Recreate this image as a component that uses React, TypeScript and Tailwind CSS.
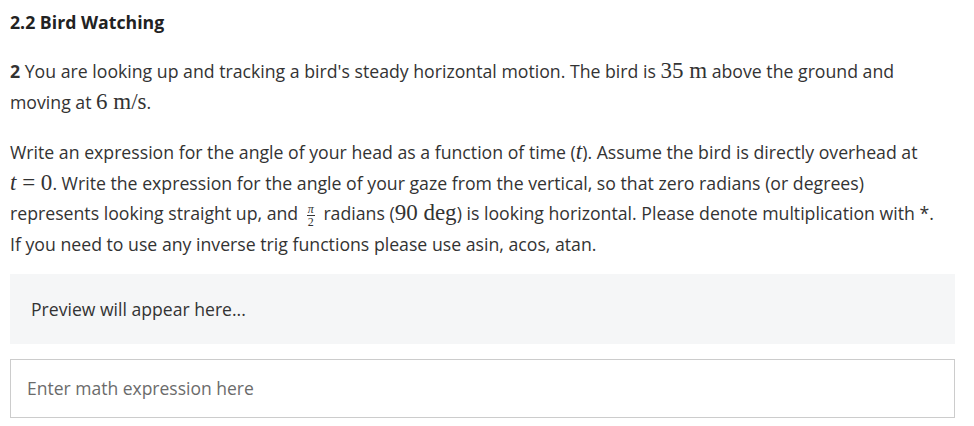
import React from 'react';

const M: React.FC<{ children: React.ReactNode; italic?: boolean }> = ({ children, italic }) => (
  <span className={`font-['Liberation_Serif',serif] text-[1.3em] leading-none ${italic ? 'italic' : ''}`}>
    {children}
  </span>
);

const Frac: React.FC<{ num: React.ReactNode; den: React.ReactNode }> = ({ num, den }) => (
  <span className="inline-flex flex-col items-center align-middle -my-3 font-['Liberation_Serif',serif] text-[12px] leading-[1] mx-[4px]">
    <span className="italic px-[1px]">{num}</span>
    <span className="block h-px w-full bg-[#333]"></span>
    <span className="px-[1px]">{den}</span>
  </span>
);

export default function App() {
  return (
    <div className="bg-white min-h-screen w-[974px] px-[10px] pt-[10px] text-[#333] font-['Open_Sans',sans-serif]">
      <h2 className="text-[17.7px] font-bold text-[#222] leading-[24px] mb-[22px]">2.2 Bird Watching</h2>

      <p className="text-[17.7px] leading-[31px] mb-[19px] whitespace-nowrap">
        <b className="font-bold">2</b> You are looking up and tracking a bird's steady horizontal motion. The bird is{' '}
        <M>35 m</M> above the ground and
        <br />
        moving at <M>6 m/s</M>.
      </p>

      <p className="text-[17.7px] leading-[30.7px] whitespace-nowrap">
        Write an expression for the angle of your head as a function of time (<M italic>t</M>). Assume the bird is
        directly overhead at
        <br />
        <M>
          <i>t</i> = 0
        </M>
        . Write the expression for the angle of your gaze from the vertical, so that zero radians (or degrees)
        <br />
        represents looking straight up, and <Frac num="π" den="2" /> radians (<M>90 deg</M>) is looking horizontal.
        Please denote multiplication with *.
        <br />
        If you need to use any inverse trig functions please use asin, acos, atan.
      </p>

      <div className="mt-[14px] w-[945px] h-[70px] bg-[#f5f6f7] flex items-center px-[21px] text-[17.6px] text-[#333]">
        Preview will appear here...
      </div>

      <input
        className="mt-[15px] block w-[945px] h-[59px] border border-[#cccccc] px-[16px] text-[17.5px] text-[#333] placeholder:text-[#6b6b6b] outline-none font-['Open_Sans',sans-serif]"
        placeholder="Enter math expression here"
      />
    </div>
  );
}
